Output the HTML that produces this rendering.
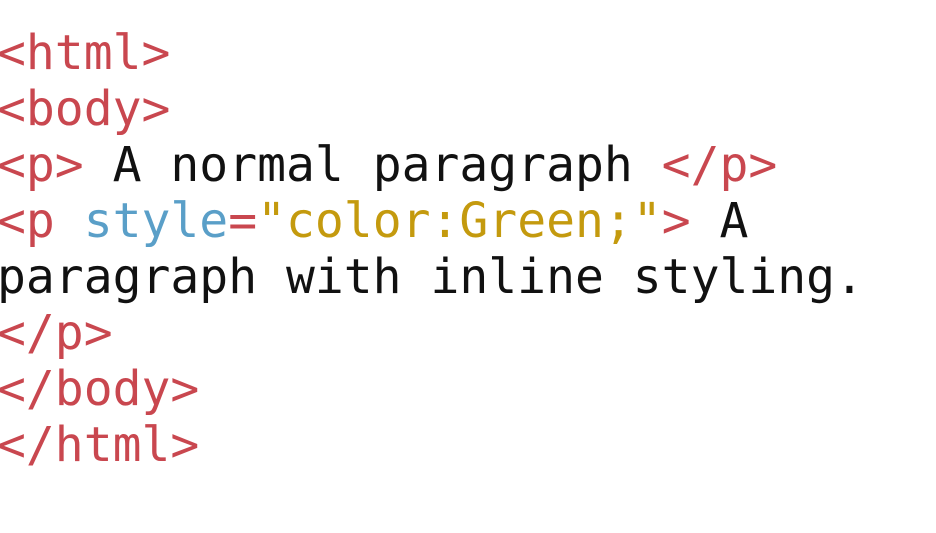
<!DOCTYPE html>
<html><head><style>
html,body{margin:0;padding:0;background:#fff;overflow:hidden;}
pre{margin:0 0 0 -3px;padding:25px 0 0 0;font-family:"DejaVu Sans Mono","Liberation Mono",monospace;font-size:48px;line-height:56px;color:#111;white-space:pre;}
.t{color:#c9474f}.a{color:#5a9fc8}.v{color:#c49a0e}
</style></head><body>
<pre><span class="t">&lt;html&gt;</span>
<span class="t">&lt;body&gt;</span>
<span class="t">&lt;p&gt;</span> A normal paragraph <span class="t">&lt;/p&gt;</span>
<span class="t">&lt;p</span> <span class="a">style</span><span class="t">=</span><span class="v">"color:Green;"</span><span class="t">&gt;</span> A
paragraph with inline styling.
<span class="t">&lt;/p&gt;</span>
<span class="t">&lt;/body&gt;</span>
<span class="t">&lt;/html&gt;</span></pre>
</body></html>
